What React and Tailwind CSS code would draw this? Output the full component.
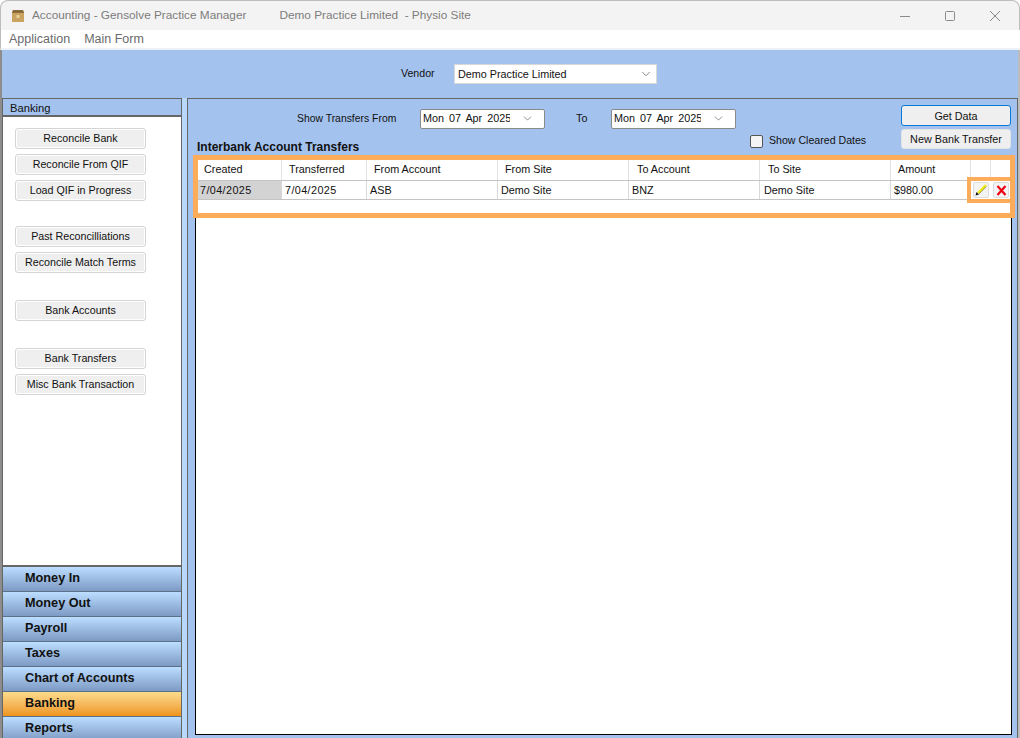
import { ChevronDown } from "lucide-react";

const groups = [
  { mt: "", items: ["Reconcile Bank", "Reconcile From QIF", "Load QIF in Progress"] },
  { mt: "mt-[25px]", items: ["Past Reconcilliations", "Reconcile Match Terms"] },
  { mt: "mt-[27px]", items: ["Bank Accounts"] },
  { mt: "mt-[27px]", items: ["Bank Transfers", "Misc Bank Transaction"] },
];

const navItems = ["Money In", "Money Out", "Payroll", "Taxes", "Chart of Accounts", "Banking", "Reports"];

const columns = [
  { label: "Created", value: "7/04/2025", w: "w-[85px]", head: "pl-[7px]", cell: "pl-[3px] tracking-[0.4px]" },
  { label: "Transferred", value: "7/04/2025", w: "w-[85px]", head: "pl-[7px]", cell: "pl-[3px] tracking-[0.4px]" },
  { label: "From Account", value: "ASB", w: "w-[131px]", head: "pl-[7px]", cell: "pl-[3px]" },
  { label: "From Site", value: "Demo Site", w: "w-[131px]", head: "pl-[7px]", cell: "pl-[3px]" },
  { label: "To Account", value: "BNZ", w: "w-[131px]", head: "pl-[8px]", cell: "pl-[3px]" },
  { label: "To Site", value: "Demo Site", w: "w-[131px]", head: "pl-[8px]", cell: "pl-[4px]" },
  { label: "Amount", value: "$980.00", w: "w-[80px]", head: "pl-[7px]", cell: "pl-[3px]" },
];

const SideButton = ({ label }) => (
  <button className="h-[21px] w-[131px] rounded-[3px] border border-[#d4d4d4] bg-[#efefef] text-[10.7px] leading-none text-[#111] shadow-[inset_0_0_0_1px_#fff]">
    {label}
  </button>
);

const DateBox = () => (
  <div className="flex h-5 w-[125px] items-center justify-between rounded-[2px] border border-[#8a8a8a] bg-white pl-[2px] pr-[10px] text-[10.8px] text-[#111]">
    <span className="w-[87px] overflow-hidden whitespace-pre [word-spacing:-0.5px]">Mon  07  Apr  2025</span>
    <ChevronDown size={13} strokeWidth={1} className="text-[#333]" />
  </div>
);

const BoxIcon = () => (
  <svg width="16" height="16" viewBox="0 0 16 16" className="mr-[6px]">
    <path d="M3 2h10l1 3v9H2V5z" fill="#c9a35f" />
    <path d="M3 2h10l1 3H2z" fill="#8a6a3a" />
    <rect x="6.5" y="7" width="3" height="3" fill="#e8d49a" />
  </svg>
);

const WindowControls = () => (
  <div className="flex items-center gap-[33px] pr-[18px]">
    <svg width="12" height="12" viewBox="0 0 12 12"><path d="M1 6.5h10" stroke="#8a8a8a" /></svg>
    <svg width="12" height="12" viewBox="0 0 12 12"><rect x="1.5" y="1.5" width="9" height="9" rx="1" fill="none" stroke="#8a8a8a" /></svg>
    <svg width="12" height="12" viewBox="0 0 12 12"><path d="M1 1l10 10M11 1L1 11" stroke="#8a8a8a" /></svg>
  </div>
);

const Pencil = () => (
  <svg width="12" height="12" viewBox="0 0 12 12">
    <path d="M3 9L11 1" stroke="#f2ea12" strokeWidth="2.4" />
    <path d="M3.6 10.2l7.6-7.6" stroke="#6b6a10" strokeWidth="0.7" />
    <path d="M0.5 11.5l1-3.5 2.5 2.5z" fill="#111" />
  </svg>
);

const Cross = () => (
  <svg width="11" height="11" viewBox="0 0 11 11">
    <path d="M1.5 1l8 9M9.5 1l-8 9" stroke="#ee0010" strokeWidth="2.2" />
  </svg>
);

export default function App() {
  const active = "Banking";

  return (
    <div className="flex h-[738px] w-[1020px] flex-col overflow-hidden font-['Liberation_Sans',sans-serif] text-[10.8px] text-[#111]">
      <div className="flex h-[30px] shrink-0 items-center justify-between rounded-t-[8px] border-x border-t border-[#bdbdbd] bg-[#f3f3f3] pl-[9px] text-[#7c7c7c]">
        <div className="flex items-center text-[11.8px]">
          <BoxIcon />
          <span>Accounting - Gensolve Practice Manager</span>
          <span className="ml-[33px] whitespace-pre">Demo Practice Limited  - Physio Site</span>
        </div>
        <WindowControls />
      </div>

      <div className="flex h-5 shrink-0 items-center gap-[14px] border-b-2 border-l border-[#eef2f8] border-l-[#bdbdbd] bg-white pl-2 text-[12.5px] text-[#6b6b6b]">
        <span>Application</span>
        <span>Main Form</span>
      </div>

      <div className="flex min-h-0 flex-1 flex-col border-l-2 border-r-2 border-l-[#8d8d8d] border-r-[#bcbcbc] bg-[#a4c2ee]">
        <div className="flex h-12 shrink-0 items-center pb-[1px] pl-[399px]">
          <span className="w-[53px] text-[10.6px]">Vendor</span>
          <div className="flex h-5 w-[203px] items-center justify-between border border-[#d8d8d8] bg-white pl-[3px] pr-[2px]">
            <span className="pt-[1px]">Demo Practice Limited</span>
            <ChevronDown size={14} strokeWidth={1} className="mr-[1px] text-[#333]" />
          </div>
        </div>

        <div className="flex min-h-0 flex-1">
          <div className="flex w-[180px] shrink-0 flex-col border-x border-t border-[#666]">
            <div className="h-[18px] shrink-0 border-b-2 border-[#666] pl-[7px] text-[11.2px] leading-[19px]">Banking</div>
            <div className="flex flex-1 flex-col bg-white pl-3 pt-[11px]">
              {groups.map((group) => (
                <div key={group.items[0]} className={`flex flex-col gap-[5px] ${group.mt}`}>
                  {group.items.map((label) => (
                    <SideButton key={label} label={label} />
                  ))}
                </div>
              ))}
            </div>
            <div className="-mb-[4px] flex shrink-0 flex-col border-t-2 border-[#666]">
              {navItems.map((item) => (
                <div
                  key={item}
                  className={`flex h-[25px] items-center border-b border-[#5c7088] pl-[22px] text-[12.7px] font-bold text-[#111] ${
                    item === active
                      ? "bg-gradient-to-b from-[#fbdc8c] to-[#ee9516]"
                      : "bg-gradient-to-b from-[#bcdeff] to-[#7d9ac4]"
                  }`}
                >
                  {item}
                </div>
              ))}
            </div>
          </div>

          <div className="w-[5px] shrink-0 bg-[#b9d9fb]" />

          <div className="flex min-w-0 flex-1 flex-col border-x border-t border-[#666] pb-[3px] pl-[7px] pr-[5px]">
            <div className="flex h-[58px] shrink-0 justify-between">
              <div className="flex flex-col">
                <div className="flex h-[38px] items-center pl-[102px] pt-[1px]">
                  <span className="w-[123px] text-[10.4px]">Show Transfers From</span>
                  <DateBox />
                  <span className="ml-[31px] w-[35px]">To</span>
                  <DateBox />
                </div>
                <div className="flex h-5 items-center">
                  <span className="ml-[2px] w-[553px] text-[12px] font-bold leading-none">Interbank Account Transfers</span>
                  <span className="-mt-[12px] h-[13px] w-[13px] rounded-[2px] border border-[#555] bg-[#f4f4f4]" />
                  <span className="-mt-[13px] ml-[6px] text-[10.6px]">Show Cleared Dates</span>
                </div>
              </div>
              <div className="mr-[1px] flex flex-col gap-[3px] pt-[6px]">
                <button className="h-[21px] w-[110px] rounded-[3px] border-[1.5px] border-[#0a78d7] bg-[#efefef] pt-[1px] leading-none">Get Data</button>
                <button className="h-5 w-[110px] rounded-[3px] border border-[#e4e4e4] bg-[#efefef] leading-none">New Bank Transfer</button>
              </div>
            </div>

            <div className="relative flex-1 border border-black bg-white pl-[1px] pt-[2px]">
              <div className="flex h-5">
                {columns.map((col) => (
                  <div key={col.label} className={`${col.w} ${col.head} border-r border-[#e2e2e2] leading-[18px]`}>
                    {col.label}
                  </div>
                ))}
                <div className="w-5 border-r border-[#e2e2e2]" />
                <div className="w-5" />
              </div>
              <div className="flex h-5 border-y border-[#c4c4c4]">
                {columns.map((col, i) => (
                  <div
                    key={col.label}
                    className={`${col.w} ${col.cell} ${i === 0 ? "bg-[#d3d3d3]" : ""} border-r border-[#d8d8d8] leading-[18px]`}
                  >
                    {col.value}
                  </div>
                ))}
                <div className="flex w-5 items-center justify-center">
                  <span className="flex h-4 w-4 items-center justify-center rounded-[2px] border border-[#ddd] bg-[#f4f4f4]"><Pencil /></span>
                </div>
                <div className="flex w-5 items-center justify-center">
                  <span className="flex h-4 w-4 items-center justify-center rounded-[2px] border border-[#ddd] bg-[#f4f4f4]"><Cross /></span>
                </div>
              </div>

              {/* orange callouts sit on top of the grid */}
              <div className="pointer-events-none absolute -left-[3px] -top-[3px] h-[63px] w-[822px] border-[5px] border-[#fdac59]" />
              <div className="pointer-events-none absolute left-[771px] top-[19px] h-[26px] w-[44px] border-[4px] border-r-0 border-[#fdac59]" />
            </div>
          </div>
        </div>
      </div>
    </div>
  );
}
